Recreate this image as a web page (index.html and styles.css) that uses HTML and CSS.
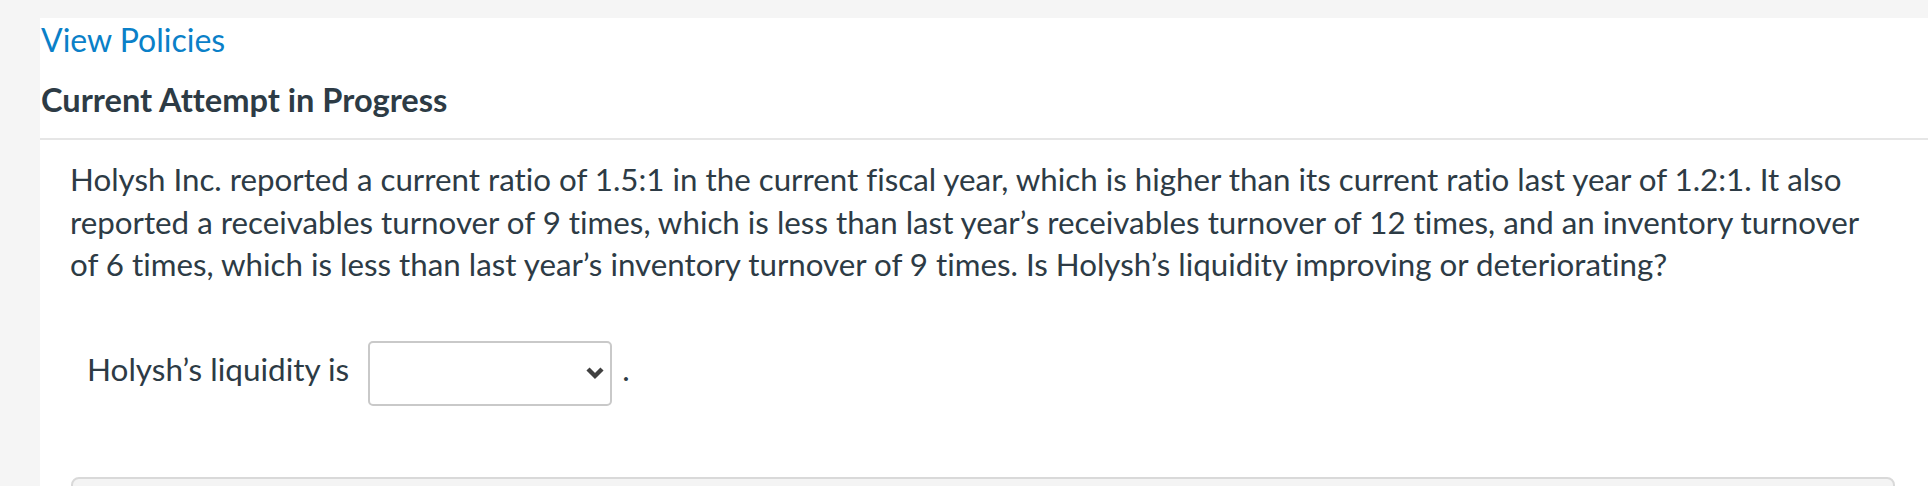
FILE: index.html
```html
<!DOCTYPE html>
<html lang="en">
<head>
<meta charset="utf-8">
<title>Current Attempt in Progress</title>
<link rel="stylesheet" href="styles.css">
</head>
<body>
<div class="page">
  <header class="head">
    <a class="policies" href="#">View Policies</a>
    <h2 class="attempt">Current Attempt in Progress</h2>
  </header>
  <section class="question">
    <p class="prompt">Holysh Inc. reported a current ratio of 1.5:1 in the current fiscal year, which is higher than its current ratio last year of 1.2:1. It also reported a receivables turnover of 9 times, which is less than last year’s receivables turnover of 12 times, and an inventory turnover of 6 times, which is less than last year’s inventory turnover of 9 times. Is Holysh’s liquidity improving or deteriorating?</p>
    <div class="answer">
      <span class="label">Holysh’s liquidity is</span>
      <div class="select">
        <svg class="chev" width="20" height="14" viewBox="0 0 20 14"><path d="M3 3 L10 10 L17 3" fill="none" stroke="#404040" stroke-width="4.4" stroke-linecap="butt" stroke-linejoin="miter"/></svg>
      </div>
      <span class="label dot">.</span>
    </div>
    <div class="panel"></div>
  </section>
</div>
</body>
</html>
```

FILE: styles.css
```css
html, body {
  margin: 0;
  padding: 0;
  height: 100%;
  overflow: hidden;
}
body {
  background: #f5f5f5;
  font-family: Lato, "Open Sans", "Liberation Sans", sans-serif;
  color: #2d3b45;
  font-variant-ligatures: no-common-ligatures;
}
.page {
  margin: 18px 0 0 40px;
  background: #ffffff;
  min-height: 600px;
  padding-top: 2px;
}
.head {
  padding-bottom: 18px;
  border-bottom: 2px solid #e6e6e6;
}
.policies {
  display: block;
  font-size: 32px;
  line-height: 40px;
  color: #0a80c8;
  text-decoration: none;
  margin-left: 1px;
}
.attempt {
  margin: 20px 0 0 1px;
  font-size: 32.6px;
  line-height: 40px;
  font-weight: 700;
  color: #2d3b45;
}
.question {
  padding: 18px 33px 0 30px;
}
.prompt {
  margin: 0 10px 0 0;
  font-size: 31.3px;
  line-height: 42.5px;
}
.answer {
  display: flex;
  align-items: flex-start;
  margin: 55px 0 0 17px;
}
.label {
  font-size: 31.5px;
  line-height: 42.5px;
  padding-top: 7px;
}
.select {
  width: 244px;
  height: 65px;
  box-sizing: border-box;
  margin-left: 19px;
  border: 2px solid #c9c9c9;
  border-radius: 5px;
  background: #fff;
  display: flex;
  align-items: center;
  justify-content: flex-end;
  padding-right: 5px;
}
.dot {
  margin-left: 10px;
}
.panel {
  margin: 71px 0 0 1px;
  height: 60px;
  background: #f4f4f4;
  border: 2px solid #d9d9d9;
  border-radius: 8px 8px 0 0;
}
```
